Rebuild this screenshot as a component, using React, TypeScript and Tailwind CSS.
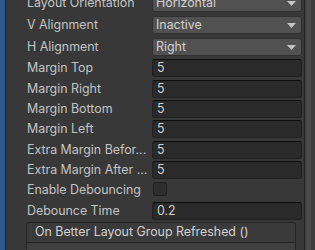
import { ReactNode } from "react";

const font = { fontFamily: "Inter, 'Noto Sans', sans-serif" };

function Row({ h, label, children }: { h: number; label: string; children: ReactNode }) {
  return (
    <div className="flex items-start" style={{ height: h }}>
      <div className="flex h-[18px] w-[125px] shrink-0 items-center whitespace-nowrap text-[12.4px] text-[#c4c4c4]">
        {label}
      </div>
      <div className="flex-1">{children}</div>
    </div>
  );
}

function Dropdown({ value }: { value: string }) {
  return (
    <div className="flex h-[18px] items-center justify-between rounded-[3px] border border-[#303030] bg-[#515151] pl-[3px] pr-[5px] text-[12.4px] text-[#d2d2d2]">
      <span>{value}</span>
      <svg width="9" height="5" viewBox="0 0 9 5">
        <path d="M0 0h9L4.5 5z" fill="#c4c4c4" />
      </svg>
    </div>
  );
}

function Field({ value }: { value: string }) {
  return (
    <div className="flex h-[18px] items-center rounded-[3px] border border-[#212121] border-t-[#0d0d0d] bg-[#2a2a2a] pl-[4px] text-[12.4px] text-[#d2d2d2]">
      {value}
    </div>
  );
}

export default function App() {
  const fields: [string, string, number][] = [
    ["Margin Top", "5", 21],
    ["Margin Right", "5", 20],
    ["Margin Bottom", "5", 20],
    ["Margin Left", "5", 21],
    ["Extra Margin Befor...", "5", 20],
    ["Extra Margin After ...", "5", 20],
  ];

  return (
    <div className="flex h-[250px] w-[315px] overflow-hidden bg-[#383838]" style={font}>
      <div className="w-[5px] shrink-0 bg-[#2c5a8a]" />
      <div className="w-px shrink-0 bg-[#232323]" />
      <div className="flex flex-1 flex-col pl-[21px] pr-[2px]">
        <div className="-mt-[6px]">
          <Row h={22} label="Layout Orientation">
            <Dropdown value="Horizontal" />
          </Row>
          <Row h={22} label="V Alignment">
            <Dropdown value="Inactive" />
          </Row>
          <Row h={21} label="H Alignment">
            <Dropdown value="Right" />
          </Row>
          {fields.map(([label, value, h]) => (
            <Row key={label} h={h} label={label}>
              <Field value={value} />
            </Row>
          ))}
          <Row h={21} label="Enable Debouncing">
            <div className="ml-px mt-[1px] h-[14px] w-[14px] rounded-[2px] border border-[#1f1f1f] bg-[#2d2d2d]" />
          </Row>
          <Row h={20} label="Debounce Time">
            <Field value="0.2" />
          </Row>
        </div>
        <div className="mr-[6px] -ml-[1px] rounded-t-[3px] border border-[#242424] bg-[#3a3a3a]">
          <div className="flex h-[20px] items-center border-b border-[#242424] pl-[8px] text-[12.4px] text-[#d2d2d2]">
            On Better Layout Group Refreshed ()
          </div>
          <div className="h-[20px] bg-[#3f3f3f]" />
        </div>
      </div>
      <div className="w-px shrink-0 bg-[#232323]" />
      <div className="flex w-[10px] shrink-0 bg-[#3e3e3e]">
        <div className="ml-[1px] w-[5px] bg-[#4b4b4b]" />
      </div>
    </div>
  );
}
